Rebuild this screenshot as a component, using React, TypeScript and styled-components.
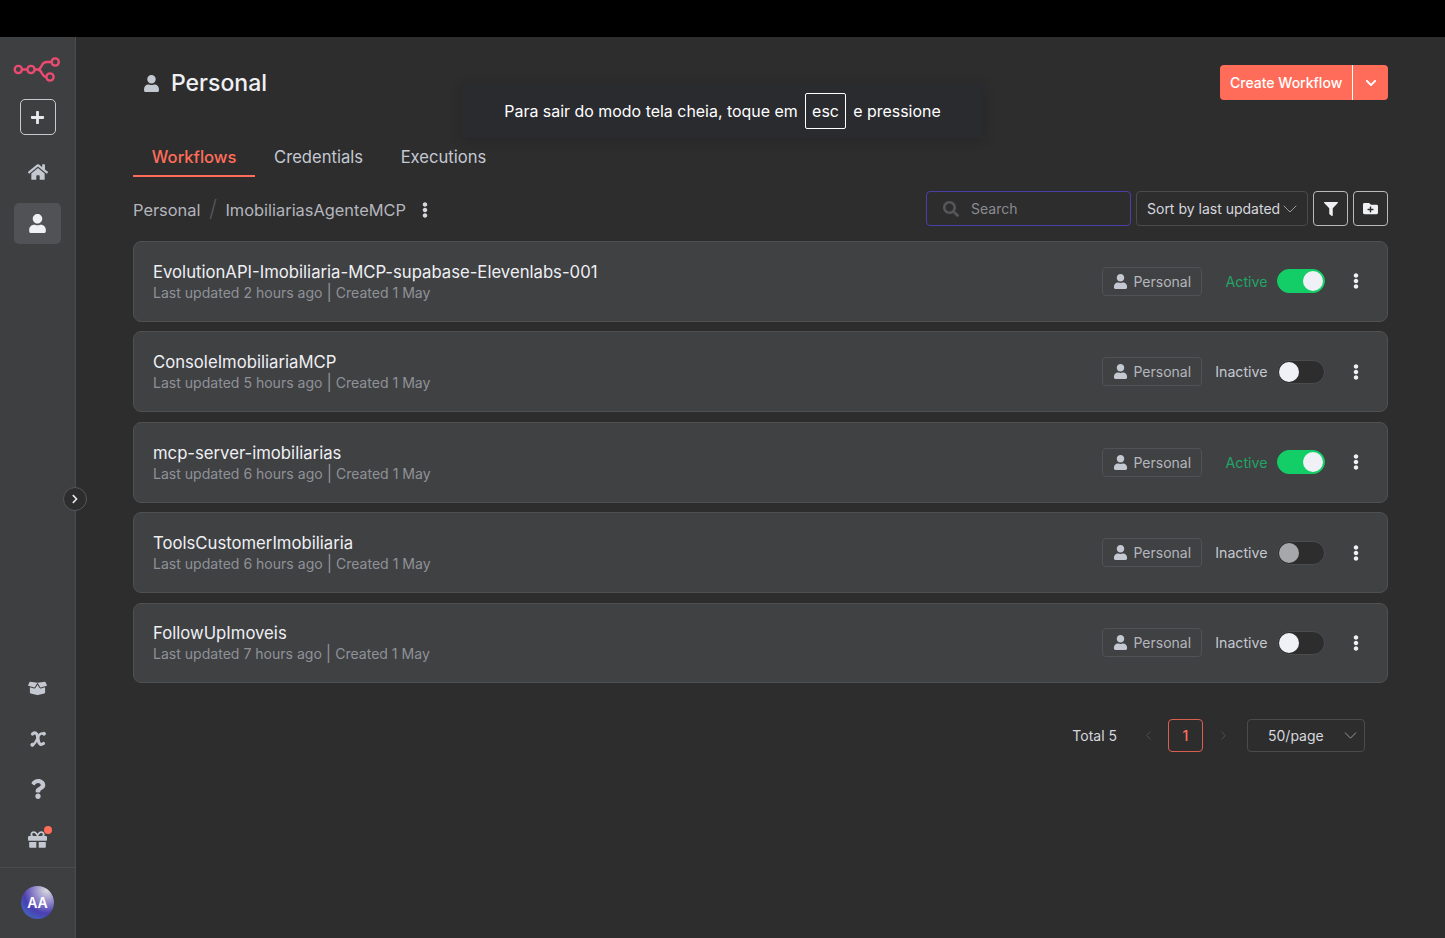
import React from 'react'
import styled, { createGlobalStyle } from 'styled-components'
import {
  FaBoxOpen,
  FaChevronDown,
  FaChevronRight,
  FaEllipsisV,
  FaFilter,
  FaFolderPlus,
  FaGift,
  FaHome,
  FaPlus,
  FaQuestion,
  FaSearch,
  FaUser,
} from 'react-icons/fa'
import { LuChevronDown, LuChevronLeft, LuChevronRight } from 'react-icons/lu'

const workflows = [
  { name: 'EvolutionAPI-Imobiliaria-MCP-supabase-Elevenlabs-001', updated: '2 hours ago', active: true, dim: false },
  { name: 'ConsoleImobiliariaMCP', updated: '5 hours ago', active: false, dim: false },
  { name: 'mcp-server-imobiliarias', updated: '6 hours ago', active: true, dim: false },
  { name: 'ToolsCustomerImobiliaria', updated: '6 hours ago', active: false, dim: true },
  { name: 'FollowUpImoveis', updated: '7 hours ago', active: false, dim: false },
]

function Logo() {
  return (
    <svg width="47" height="25" viewBox="0 0 47 25" fill="none" stroke="#ea4b71" strokeWidth="2.4">
      <circle cx="5.300" cy="12.500" r="3.600" />
      <circle cx="18" cy="12.500" r="3.600" />
      <circle cx="42.200" cy="5" r="3.600" />
      <circle cx="37" cy="20" r="3.600" />
      <path d="M8.900 12.500h5.500M21.600 12.500h2.900c3 0 3.500-2.500 4.500-4.500 1-2 2.500-3 5-3h4.600M24.500 12.500c3 0 3.500 2 4.500 4 1 2 2.500 3.500 4.400 3.500" />
    </svg>
  )
}

function VariableIcon() {
  return (
    <svg width="16" height="17" viewBox="0 -1 16 17" fill="none" stroke="#c4c8d1" strokeLinecap="round">
      <path strokeWidth="3.200" d="M2.500 3c2.800-2 4.300-1 5 2l1 5.500c.6 3 2.600 3.500 5 2" />
      <path strokeWidth="2.400" d="M13.500 3c-2.500-1.500-4.300.5-5.500 3.200-1.400 3.200-2.700 6.300-4.500 7" />
      <circle cx="2.400" cy="13.800" r="1.600" fill="#c4c8d1" strokeWidth="1" />
      <circle cx="14" cy="2.700" r="1.500" fill="#c4c8d1" strokeWidth="1" />
    </svg>
  )
}

export default function App() {
  return (
    <>
      <GlobalStyle />
      <TopBar />
      <Shell>
        <Sidebar>
          <LogoSlot><Logo /></LogoSlot>
          <AddButton><FaPlus size={15} /></AddButton>
          <NavItem><FaHome size={20} /></NavItem>
          <NavItem $active><FaUser size={19} /></NavItem>
          <SidebarSpacer />
          <NavItem $compact><FaBoxOpen size={19} /></NavItem>
          <NavItem $compact><VariableIcon /></NavItem>
          <NavItem $compact><FaQuestion size={20} /></NavItem>
          <NavItem $compact>
            <GiftSlot>
              <FaGift size={19} />
              <RedDot />
            </GiftSlot>
          </NavItem>
          <UserArea>
            <Avatar>AA</Avatar>
          </UserArea>
          <CollapseButton><FaChevronRight size={10} /></CollapseButton>
        </Sidebar>

        <Main>
          <Header>
            <ProjectTitle>
              <FaUser size={17} color="#c4c8d1" />
              <span>Personal</span>
            </ProjectTitle>
            <CreateGroup>
              <CreateLabel>Create Workflow</CreateLabel>
              <CreateCaret><FaChevronDown size={12} /></CreateCaret>
            </CreateGroup>
          </Header>

          <Tabs>
            <Tab $active>Workflows</Tab>
            <Tab>Credentials</Tab>
            <Tab>Executions</Tab>
          </Tabs>

          <Toolbar>
            <Breadcrumbs>
              <span>Personal</span>
              <Slash>/</Slash>
              <span>ImobiliariasAgenteMCP</span>
              <CrumbMenu><FaEllipsisV size={16} /></CrumbMenu>
            </Breadcrumbs>
            <Filters>
              <SearchBox>
                <FaSearch size={16} color="#55565a" />
                <span>Search</span>
              </SearchBox>
              <SortSelect>
                <span>Sort by last updated</span>
                <SelectCaret><LuChevronDown size={24} strokeWidth={1} color="#9a9ba0" /></SelectCaret>
              </SortSelect>
              <IconButton><FaFilter size={14} /></IconButton>
              <IconButton><FaFolderPlus size={15} /></IconButton>
            </Filters>
          </Toolbar>

          <CardList>
            {workflows.map((w) => (
              <Card key={w.name}>
                <CardText>
                  <CardTitle>{w.name}</CardTitle>
                  <CardMeta>
                    Last updated {w.updated} <MetaBar>|</MetaBar> Created 1 May
                  </CardMeta>
                </CardText>
                <CardActions>
                  <OwnerTag>
                    <FaUser size={15} color="#c4c8d1" />
                    <span>Personal</span>
                  </OwnerTag>
                  <StatusLabel $active={w.active}>{w.active ? 'Active' : 'Inactive'}</StatusLabel>
                  <Switch $on={w.active}>
                    <Knob $on={w.active} $dim={w.dim} />
                  </Switch>
                  <CardMenu><FaEllipsisV size={16} /></CardMenu>
                </CardActions>
              </Card>
            ))}
          </CardList>

          <Pagination>
            <Total>Total 5</Total>
            <PageArrow><LuChevronLeft size={15} strokeWidth={1.5} /></PageArrow>
            <PageNumber>1</PageNumber>
            <PageArrow><LuChevronRight size={15} strokeWidth={1.5} /></PageArrow>
            <PageSize>
              <span>50/page</span>
              <SelectCaret><LuChevronDown size={21} strokeWidth={1.1} color="#9a9ba0" /></SelectCaret>
            </PageSize>
          </Pagination>
        </Main>
      </Shell>

      <FullscreenToast>
        <span>Para sair do modo tela cheia, toque em</span>
        <EscKey>esc</EscKey>
        <span>e pressione</span>
      </FullscreenToast>
    </>
  )
}

const GlobalStyle = createGlobalStyle`
  html, body {
    margin: 0;
    height: 100%;
    background: #2d2d2e;
    overflow: hidden;
  }
  * {
    box-sizing: border-box;
  }
  body {
    font-family: Inter, "Liberation Sans", sans-serif;
    color: #d6d8de;
  }
`

const TopBar = styled.div`
  height: 37px;
  background: #000;
`

const Shell = styled.div`
  display: flex;
  height: 901px;
`

const Sidebar = styled.aside`
  position: relative;
  flex: 0 0 76px;
  display: flex;
  flex-direction: column;
  align-items: center;
  background: #3e3f41;
  border-right: 1px solid #4b4c4e;
`

const LogoSlot = styled.div`
  height: 62px;
  display: flex;
  align-items: center;
  justify-content: center;
  padding: 3px 3px 0 0;
`

const AddButton = styled.div`
  width: 36px;
  height: 36px;
  display: flex;
  align-items: center;
  justify-content: center;
  border: 1.500px solid #c9cacd;
  border-radius: 5px;
  color: #e8e9ee;
  margin-bottom: 16px;
`

const NavItem = styled.div<{ $active?: boolean; $compact?: boolean }>`
  width: 47px;
  height: ${(p) => (p.$compact ? '50.500px' : '41px')};
  margin-bottom: ${(p) => (p.$compact ? '0' : '10.500px')};
  display: flex;
  align-items: center;
  justify-content: center;
  border-radius: 5px;
  color: ${(p) => (p.$active ? '#eff0f4' : '#c4c8d1')};
  background: ${(p) => (p.$active ? '#515255' : 'transparent')};
`

const SidebarSpacer = styled.div`
  flex: 1;
`

const GiftSlot = styled.div`
  position: relative;
  display: flex;
`

const RedDot = styled.div`
  position: absolute;
  top: -4px;
  right: -5px;
  width: 8px;
  height: 8px;
  border-radius: 50%;
  background: #ff6d5a;
`

const UserArea = styled.div`
  width: 100%;
  height: 71px;
  margin-top: 2px;
  padding-bottom: 2px;
  border-top: 1px solid #4b4c4e;
  display: flex;
  align-items: center;
  justify-content: center;
`

const Avatar = styled.div`
  width: 33px;
  height: 33px;
  border-radius: 50%;
  display: flex;
  align-items: center;
  justify-content: center;
  background: radial-gradient(circle at 78% 12%, #dcdce0 0%, #8a80c8 36%, #4a3fb0 60%, #3f78c8 100%);
  color: #fff;
  font-size: 14px;
  font-weight: 600;
`

const CollapseButton = styled.div`
  position: absolute;
  top: 450px;
  right: -12px;
  width: 24px;
  height: 24px;
  border-radius: 50%;
  display: flex;
  align-items: center;
  justify-content: center;
  background: #2d2d2e;
  border: 1px solid #55565a;
  color: #e8e9ee;
`

const Main = styled.main`
  flex: 1;
  padding: 28px 57px 0 57px;
`

const Header = styled.div`
  display: flex;
  justify-content: space-between;
  align-items: center;
  height: 35px;
`

const ProjectTitle = styled.div`
  display: flex;
  align-items: center;
  gap: 11px;
  padding-left: 10px;
  padding-top: 1px;
  font-size: 23px;
  font-weight: 500;
  color: #eff0f4;
`

const CreateGroup = styled.div`
  display: flex;
  height: 35px;
  background: #ff6d5a;
  border-radius: 4px;
  color: #fff;
  font-size: 14px;
  font-weight: 500;
`

const CreateLabel = styled.div`
  display: flex;
  align-items: center;
  padding: 0 10px;
  width: 133px;
  white-space: nowrap;
  border-right: 1px solid #fff;
`

const CreateCaret = styled.div`
  flex: 0 0 35px;
  display: flex;
  align-items: center;
  justify-content: center;
`

const Tabs = styled.div`
  display: flex;
  margin-top: 31px;
`

const Tab = styled.div<{ $active?: boolean }>`
  height: 46px;
  padding: 16px 18.800px 0;
  font-size: 16.600px;
  font-weight: ${(p) => (p.$active ? 500 : 400)};
  color: ${(p) => (p.$active ? '#ff6d5a' : '#c4c8d1')};
  border-bottom: 2px solid ${(p) => (p.$active ? '#ff6d5a' : 'transparent')};
`

const Toolbar = styled.div`
  display: flex;
  justify-content: space-between;
  align-items: center;
  margin-top: 13.500px;
  height: 36px;
`

const Breadcrumbs = styled.div`
  display: flex;
  align-items: center;
  gap: 8.500px;
  padding-top: 2px;
  font-size: 16.400px;
  color: #b4b6bd;
`

const Slash = styled.span`
  font-size: 23px;
  line-height: 1;
  color: #55565a;
  font-weight: 300;
`

const CrumbMenu = styled.div`
  display: flex;
  margin-left: 2px;
  color: #d6d8de;
`

const Filters = styled.div`
  display: flex;
  gap: 5px;
  margin-left: auto;
`

const SearchBox = styled.div`
  width: 205px;
  height: 35px;
  display: flex;
  align-items: center;
  gap: 12px;
  padding-left: 16px;
  border: 1px solid #4a3fa8;
  border-radius: 4px;
  color: #8a8b90;
  font-size: 14px;
`

const SortSelect = styled.div`
  width: 172px;
  height: 35px;
  display: flex;
  align-items: center;
  justify-content: space-between;
  padding: 0 11px 0 10px;
  border: 1px solid #4a4b4d;
  border-radius: 4px;
  color: #d6d8de;
  font-size: 14px;
  white-space: nowrap;
`

const SelectCaret = styled.div`
  width: 12px;
  display: flex;
  justify-content: center;

  & > svg {
    flex-shrink: 0;
  }
`

const IconButton = styled.div`
  width: 35px;
  height: 35px;
  display: flex;
  align-items: center;
  justify-content: center;
  border: 1px solid #b8b9bc;
  border-radius: 4px;
  color: #eff0f4;
`

const CardList = styled.div`
  display: flex;
  flex-direction: column;
  gap: 9.600px;
  margin-top: 14.500px;
`

const Card = styled.div`
  height: 80.800px;
  display: flex;
  align-items: center;
  justify-content: space-between;
  padding: 0 23.500px 0 19px;
  background: #404143;
  border: 1px solid #4f5052;
  border-radius: 8px;
`

const CardText = styled.div`
  display: flex;
  flex-direction: column;
  padding-top: 1px;
`

const CardTitle = styled.div`
  font-size: 16.690px;
  font-weight: 400;
  line-height: 21px;
  color: #eff0f4;
`

const CardMeta = styled.div`
  font-size: 14.050px;
  line-height: 18px;
  color: #8f9198;
`

const MetaBar = styled.span`
  font-size: 16px;
`

const CardActions = styled.div`
  display: flex;
  align-items: center;
`

const OwnerTag = styled.div`
  width: 100px;
  height: 29px;
  display: flex;
  align-items: center;
  gap: 6px;
  padding-left: 10px;
  border: 1px solid #515255;
  border-radius: 4px;
  color: #b4b6bd;
  font-size: 14px;
`

const StatusLabel = styled.div<{ $active: boolean }>`
  width: 66px;
  margin-right: 9.500px;
  text-align: right;
  font-size: 14.200px;
  color: ${(p) => (p.$active ? '#20a565' : '#c4c8d1')};
`

const Switch = styled.div<{ $on: boolean }>`
  position: relative;
  width: 47.500px;
  height: 24px;
  border-radius: 12px;
  background: ${(p) => (p.$on ? '#13ce66' : '#2d2d2e')};
  border: 1px solid ${(p) => (p.$on ? '#13ce66' : '#4b4c4e')};
`

const Knob = styled.div<{ $on: boolean; $dim: boolean }>`
  position: absolute;
  top: 1px;
  left: ${(p) => (p.$on ? '25px' : '1px')};
  width: 20px;
  height: 20px;
  border-radius: 50%;
  background: ${(p) => (p.$dim ? '#a6a7aa' : '#f0f1f6')};
`

const CardMenu = styled.div`
  width: 16px;
  margin-left: 23px;
  display: flex;
  justify-content: center;
  color: #eff0f4;
`

const Pagination = styled.div`
  display: flex;
  align-items: center;
  margin-top: 36px;
  padding-right: 23px;
  justify-content: flex-end;
`

const Total = styled.div`
  font-size: 14px;
  color: #d6d8de;
  margin-right: 21px;
`

const PageArrow = styled.div`
  width: 20px;
  display: flex;
  justify-content: center;
  color: #4f5052;
`

const PageNumber = styled.div`
  width: 35px;
  height: 33px;
  margin: 0 10px;
  display: flex;
  align-items: center;
  justify-content: center;
  border: 1px solid #d9604e;
  border-radius: 4px;
  color: #ff6d5a;
  font-size: 14px;
  font-weight: 500;
`

const PageSize = styled.div`
  width: 118px;
  height: 33px;
  margin-left: 14px;
  display: flex;
  align-items: center;
  justify-content: space-between;
  padding: 0 8px 0 20px;
  border: 1px solid #4a4b4d;
  border-radius: 4px;
  color: #d6d8de;
  font-size: 14px;
`

const FullscreenToast = styled.div`
  position: absolute;
  top: 84px;
  left: 462px;
  width: 521px;
  height: 54px;
  display: flex;
  align-items: center;
  justify-content: center;
  gap: 7.500px;
  background: #2a2b2f;
  box-shadow: 0 2px 12px rgba(0, 0, 0, 0.18);
  color: #fff;
  font-size: 15.950px;
`

const EscKey = styled.span`
  height: 36px;
  padding: 0 5.800px;
  display: flex;
  align-items: center;
  border: 1px solid #fff;
  border-radius: 2px;
`
